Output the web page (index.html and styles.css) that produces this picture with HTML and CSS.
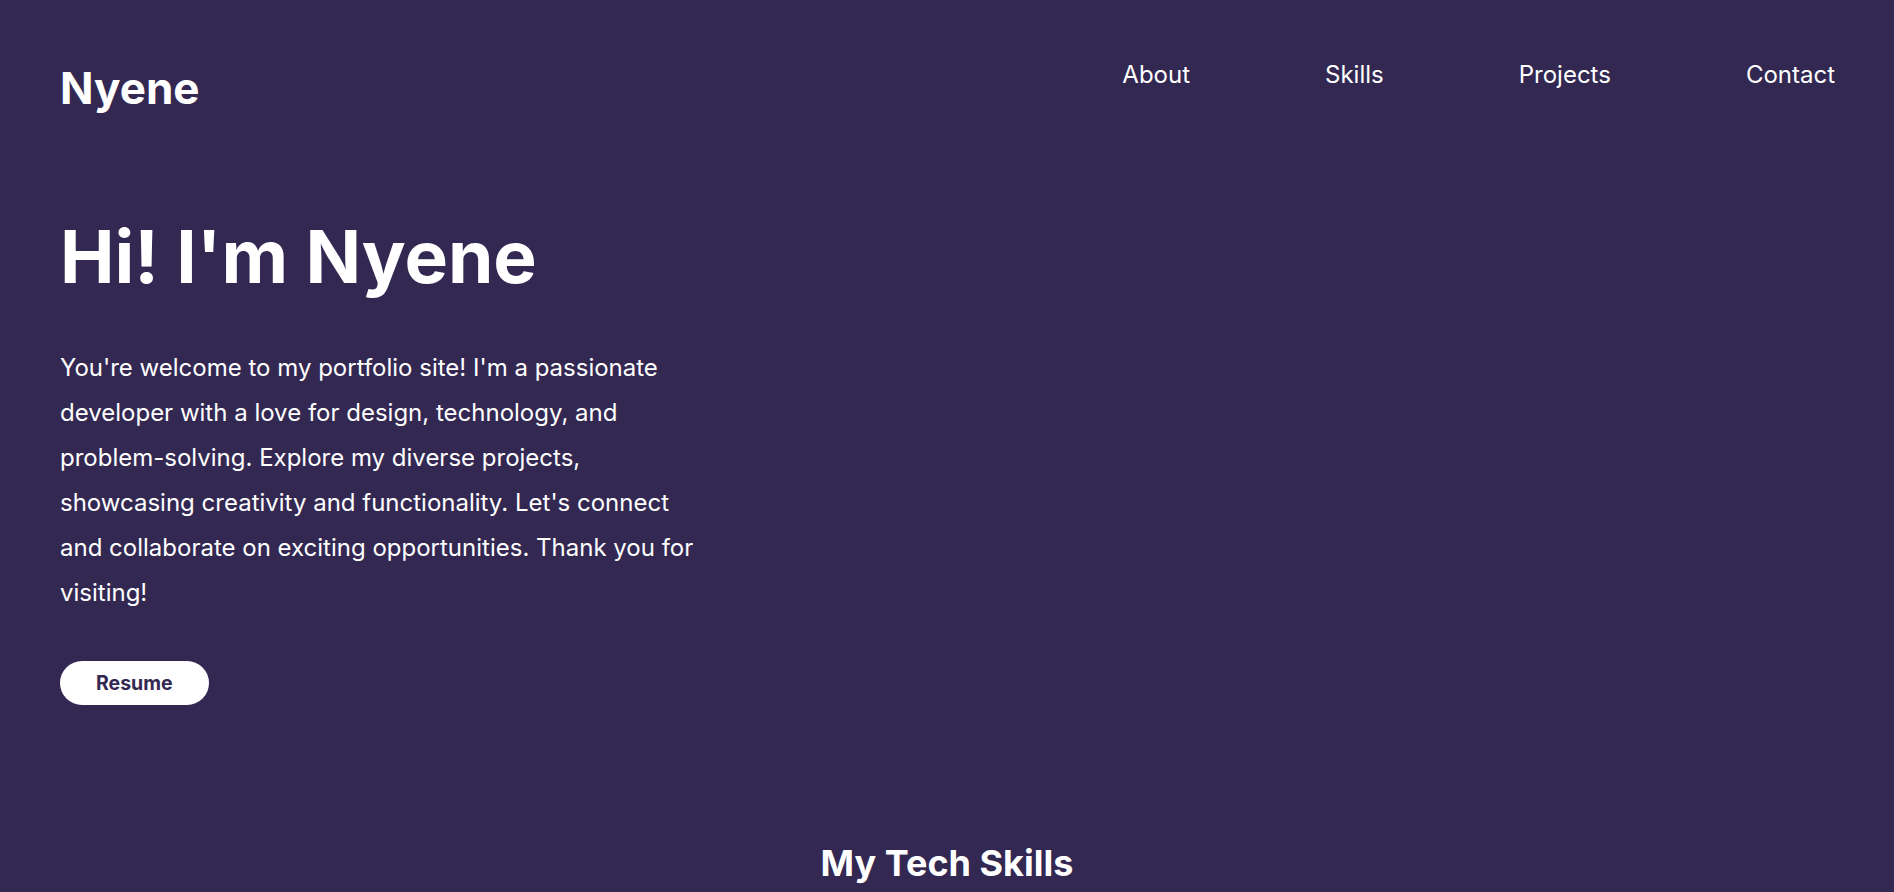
FILE: index.html
```html
<!DOCTYPE html>
<html lang="en">
<head>
<meta charset="utf-8">
<title>Nyene | Portfolio</title>
<link rel="stylesheet" href="styles.css">
</head>
<body>
<header class="site-header">
  <a class="logo" href="#">Nyene</a>
  <nav class="nav">
    <ul class="nav-list">
      <li><a class="nav-link" href="#about">About</a></li>
      <li><a class="nav-link" href="#skills">Skills</a></li>
      <li><a class="nav-link" href="#projects">Projects</a></li>
      <li><a class="nav-link" href="#contact">Contact</a></li>
    </ul>
  </nav>
</header>
<main>
  <section class="hero" id="about">
    <h1 class="hero-title">Hi! I'm Nyene</h1>
    <p class="hero-text">You're welcome to my portfolio site! I'm a passionate developer with a love for design, technology, and problem-solving. Explore my diverse projects, showcasing creativity and functionality. Let's connect and collaborate on exciting opportunities. Thank you for visiting!</p>
    <a class="btn" href="#">Resume</a>
  </section>
  <section class="skills" id="skills">
    <h2 class="section-title">My Tech Skills</h2>
  </section>
</main>
</body>
</html>
```
FILE: styles.css
```css
* {
  box-sizing: border-box;
}

html, body {
  margin: 0;
  padding: 0;
}

body {
  background: #332852;
  color: #ffffff;
  font-family: Inter, "Noto Sans", "Liberation Sans", sans-serif;
}

a {
  color: inherit;
  text-decoration: none;
}

.site-header {
  display: flex;
  justify-content: space-between;
  align-items: flex-start;
  padding: 60px 59px 0 60px;
}

.logo {
  font-size: 44px;
  font-weight: 700;
  margin-top: 1px;
  line-height: normal;
}

.nav-list {
  display: flex;
  gap: 135px;
  list-style: none;
  margin: 0;
  padding: 0;
}

.nav-link {
  font-size: 24px;
  font-weight: 400;
}

.hero {
  padding: 97px 60px 0 60px;
}

.hero-title {
  margin: 0;
  font-size: 73px;
  font-weight: 700;
  line-height: normal;
}

.hero-text {
  max-width: 634px;
  margin: 44px 0 46px 0;
  font-size: 24px;
  line-height: 45px;
}

.btn {
  display: inline-block;
  background: #ffffff;
  color: #332852;
  font-size: 19.5px;
  font-weight: 700;
  padding: 10px 36px;
  border-radius: 999px;
}

.skills {
  padding-top: 136px;
  text-align: center;
}

.section-title {
  margin: 0;
  font-size: 36px;
  font-weight: 700;
  line-height: normal;
}
```
